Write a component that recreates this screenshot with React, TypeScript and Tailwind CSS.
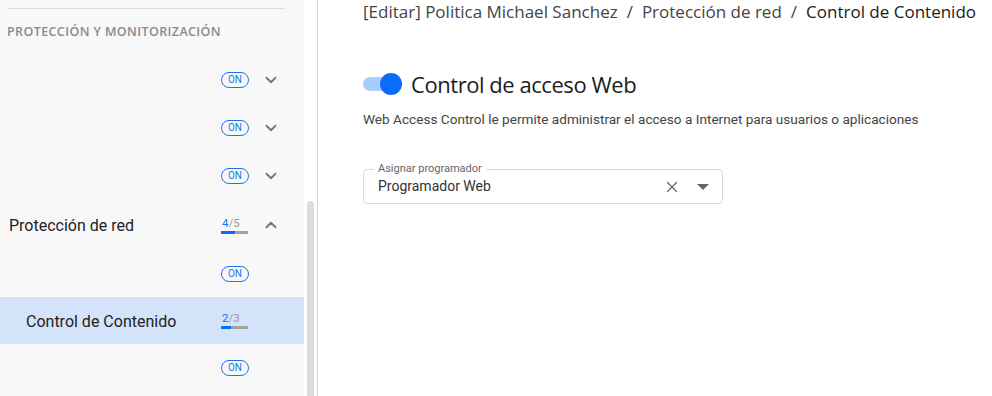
import React from 'react';
import { ChevronDown, ChevronUp, X } from 'lucide-react';

type Row =
  | { kind: 'toggle'; chevron?: boolean }
  | { kind: 'group'; label: string; done: number; total: number; active?: boolean; indent?: boolean };

function OnPill() {
  return (
    <span className="flex h-[16px] w-[28px] items-center justify-center rounded-full border border-[#1a73f0] text-[10px] leading-none text-[#1a73f0] font-['Roboto',sans-serif]">
      ON
    </span>
  );
}

function Progress({ done, total }: { done: number; total: number }) {
  return (
    <div className="flex w-[27px] flex-col font-['Roboto',sans-serif]">
      <div className="pl-[1px] text-[11.5px] leading-[12px]">
        <span className="text-[#1a73f0]">{done}</span>
        <span className="text-[#9a9a9a]">/{total}</span>
      </div>
      <div className="mt-[2px] flex h-[3px] w-full">
        <div className="h-full bg-[#0b6cf3]" style={{ width: `${(done / total) * 100 - 30}%` }} />
        <div className="h-full flex-1 bg-[#a3a3a3]" />
      </div>
    </div>
  );
}

export default function App() {
  const rows: { row: Row; h: string }[] = [
    { row: { kind: 'toggle', chevron: true }, h: 'h-[48px]' },
    { row: { kind: 'toggle', chevron: true }, h: 'h-[48px]' },
    { row: { kind: 'toggle', chevron: true }, h: 'h-[48px]' },
    { row: { kind: 'group', label: 'Protección de red', done: 4, total: 5 }, h: 'h-[50px]' },
    { row: { kind: 'toggle' }, h: 'h-[47px]' },
    { row: { kind: 'group', label: 'Control de Contenido', done: 2, total: 3, active: true, indent: true }, h: 'h-[47px]' },
    { row: { kind: 'toggle' }, h: 'h-[48px]' },
  ];

  return (
    <div className="flex h-[396px] w-[992px] overflow-hidden bg-white">
      {/* Sidebar */}
      <aside className="flex h-full w-[318px] shrink-0 border-r border-[#d4d4d4]">
        <div className="h-full w-[304px] bg-[#f8f8f8]">
          <div className="mx-[7px] mt-[8px] w-[278px] border-t border-[#dcdcdc]" />
          <div className="px-[7px] pt-[15px] pb-[16px] text-[12.5px] font-semibold leading-[16px] tracking-[0.4px] text-[#8a8a8a] font-['Open_Sans',sans-serif]">
            PROTECCIÓN Y MONITORIZACIÓN
          </div>
          {rows.map(({ row, h }, i) => (
            <div
              key={i}
              className={`flex items-center ${h} ${row.kind === 'group' && row.active ? 'bg-[#d3e3f9]' : ''}`}
            >
              <div className={`flex-1 pt-[2px] text-[16px] text-[#222] font-['Roboto',sans-serif] ${row.kind === 'group' && row.indent ? 'pl-[26px]' : 'pl-[9px]'}`}>
                {row.kind === 'group' ? row.label : ''}
              </div>
              <div className="flex w-[28px] justify-start">
                {row.kind === 'toggle' ? <OnPill /> : <Progress done={row.done} total={row.total} />}
              </div>
              <div className="flex w-[55px] items-center pl-[13px]">
                {row.kind === 'toggle' && row.chevron && <ChevronDown size={18} strokeWidth={2.5} className="text-[#777]" />}
                {row.kind === 'group' && !row.active && <ChevronUp size={18} strokeWidth={2.5} className="text-[#777]" />}
              </div>
            </div>
          ))}
        </div>
        {/* scrollbar */}
        <div className="flex h-full w-[13px] flex-col pl-[3px] pt-[201px]">
          <div className="w-[7px] flex-1 rounded-t-full bg-[#dcdcdc]" />
        </div>
      </aside>

      {/* Main content */}
      <main className="flex-1 pl-[45px] pt-[1px]">
        <nav className="flex items-center gap-[9px] text-[17px] leading-[22px] text-[#444] font-['Open_Sans',sans-serif]">
          <span>[Editar] Politica Michael Sanchez</span>
          <span>/</span>
          <span>Protección de red</span>
          <span>/</span>
          <span className="text-[#1a1a1a]">Control de Contenido</span>
        </nav>

        <div className="mt-[46px] flex items-center gap-[9px]">
          <div className="relative h-[22px] w-[39px]">
            <div className="absolute left-0 top-[4px] h-[14px] w-[34px] rounded-full bg-[#a8ccfd]" />
            <div className="absolute right-0 top-0 h-[22px] w-[22px] rounded-full bg-[#0a6cf7]" />
          </div>
          <h1 className="text-[22px] leading-[30px] tracking-[-0.45px] text-[#1c1c1c] font-['Open_Sans',sans-serif]">
            Control de acceso Web
          </h1>
        </div>

        <p className="mt-[11px] text-[13.6px] leading-[18px] text-[#444] font-['Roboto',sans-serif]">
          Web Access Control le permite administrar el acceso a Internet para usuarios o aplicaciones
        </p>

        <div className="relative mt-[41px] flex h-[35px] w-[360px] items-center rounded-[4px] border border-[#d9d9d9] pl-[14px] pr-[12px]">
          <span className="absolute -top-[8px] left-[10px] bg-white px-[4px] text-[11px] leading-[14px] text-[#666] font-['Roboto',sans-serif]">
            Asignar programador
          </span>
          <span className="flex-1 text-[14px] text-[#333] font-['Roboto',sans-serif]">Programador Web</span>
          <X size={18} strokeWidth={1.6} className="mr-[16px] text-[#666]" />
          <svg width="12" height="6" viewBox="0 0 12 6" className="mr-[1px]">
            <path d="M0 0 L12 0 L6 6 Z" fill="#666" />
          </svg>
        </div>
      </main>
    </div>
  );
}
